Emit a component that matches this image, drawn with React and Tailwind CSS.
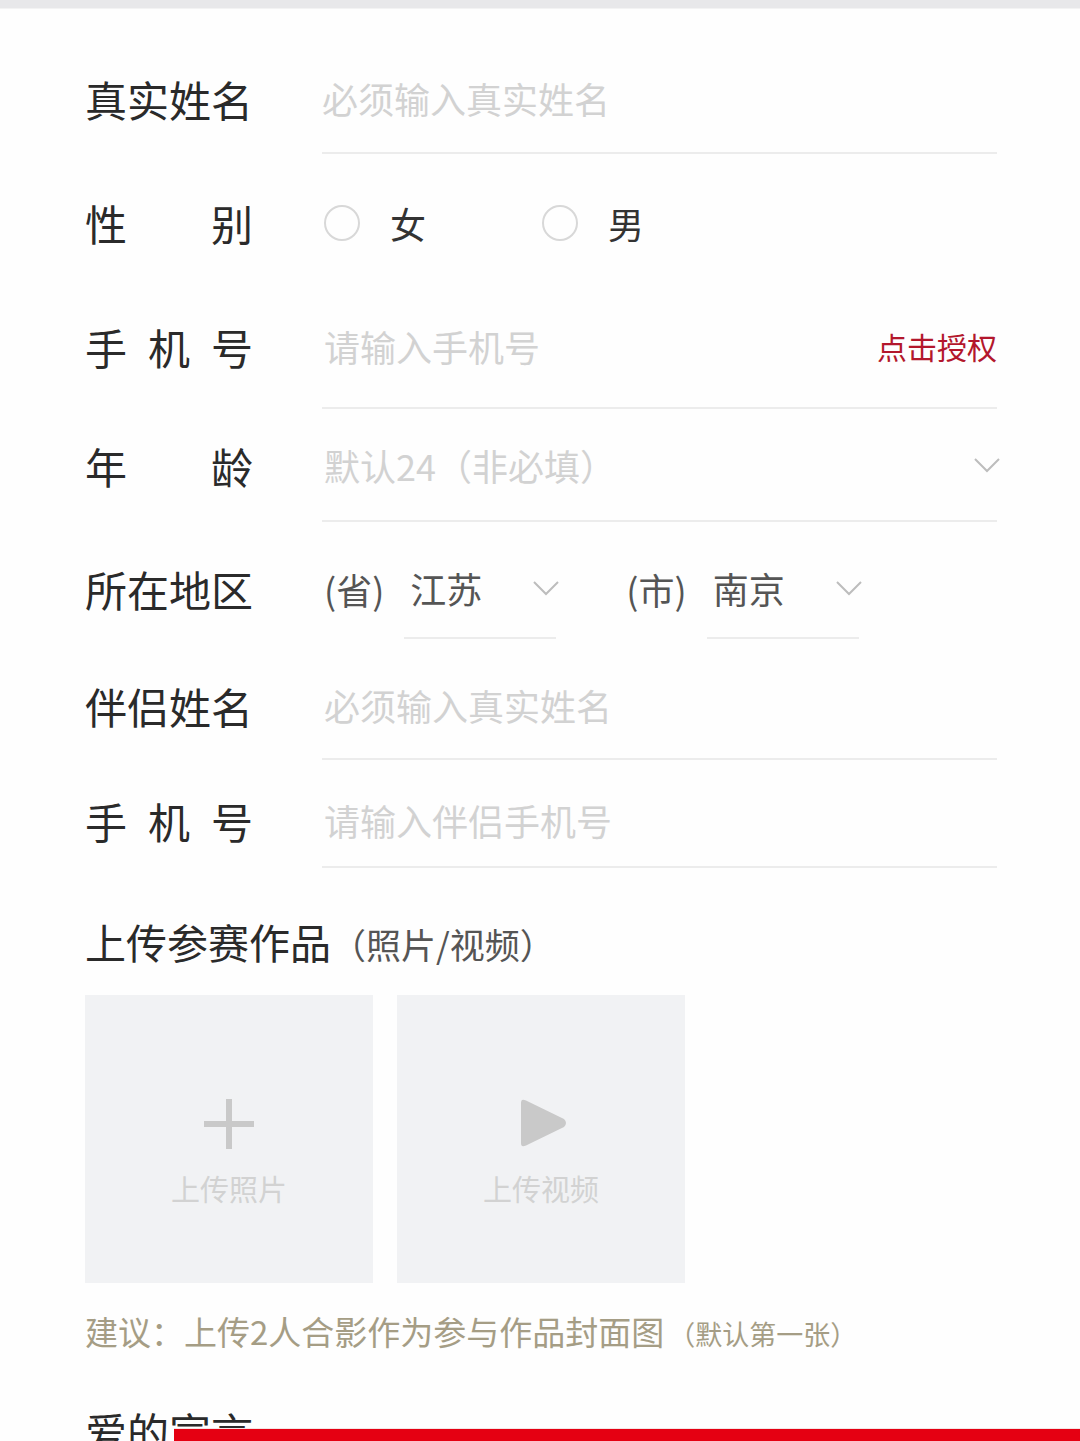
import React from "react";

const FONT = "font-['Noto_Sans_CJK_SC','Noto_Sans',sans-serif]";

function Label({ chars }) {
  return (
    <div className="flex w-[168px] shrink-0 items-center justify-between text-[42px] leading-none text-[#2a2a2a]">
      {chars.map((c, i) => (
        <span key={i}>{c}</span>
      ))}
    </div>
  );
}

function Chevron({ className = "" }) {
  return (
    <svg width="28" height="16" viewBox="0 0 28 16" className={className}>
      <polyline points="2,2 14,14 26,2" fill="none" stroke="#bdbdbd" strokeWidth="2" />
    </svg>
  );
}

function TextInput({ placeholder }) {
  return (
    <input
      placeholder={placeholder}
      className="w-full min-w-0 flex-1 bg-transparent text-[36px] leading-none text-[#333] outline-none placeholder:text-[#d2d2d2]"
    />
  );
}

function Radio({ label }) {
  return (
    <label className="flex items-center">
      <span className="h-[36px] w-[36px] rounded-full border-2 border-[#d8d8d8]" />
      <span className="ml-[30px] text-[36px] leading-none text-[#333]">{label}</span>
    </label>
  );
}

function SubSelect({ value }) {
  return (
    <div className="flex w-[152px] items-center justify-between border-b-2 border-[#ececec] pl-[6px]">
      <span className="text-[36px] leading-none text-[#555]">{value}</span>
      <Chevron className="mr-[-4px]" />
    </div>
  );
}

export default function App() {
  return (
    <div className={`relative h-[1441px] overflow-hidden bg-[#fefefe] ${FONT}`}>
      <div className="h-[9px] border-b border-[#f3f3f3] bg-[#e8e8ea]" />

      <div className="pl-[85px] pr-[83px]">
        {/* 真实姓名 */}
        <div className="flex h-[145px] pt-[35px]">
          <Label chars={["真", "实", "姓", "名"]} />
          <div className="ml-[69px] flex flex-1 items-center border-b-2 border-[#ececec]">
            <TextInput placeholder="必须输入真实姓名" />
          </div>
        </div>

        {/* 性别 */}
        <div className="flex h-[130px] pt-[8px]">
          <Label chars={["性", "别"]} />
          <div className="ml-[71px] flex flex-1 items-center gap-[116px]">
            <Radio label="女" />
            <Radio label="男" />
          </div>
        </div>

        {/* 手机号 */}
        <div className="flex h-[125px]">
          <Label chars={["手", "机", "号"]} />
          <div className="ml-[69px] flex flex-1 items-center border-b-2 border-[#ececec] pl-[2px]">
            <TextInput placeholder="请输入手机号" />
            <span className="text-[30px] leading-none text-[#b3172c]">点击授权</span>
          </div>
        </div>

        {/* 年龄 */}
        <div className="flex h-[113px]">
          <Label chars={["年", "龄"]} />
          <div className="ml-[69px] flex flex-1 items-center justify-between border-b-2 border-[#ececec] pl-[2px]">
            <span className="text-[36px] leading-none text-[#d2d2d2]">默认24（非必填）</span>
            <Chevron className="mr-[-4px]" />
          </div>
        </div>

        {/* 所在地区 */}
        <div className="flex h-[117px] pt-[17px]">
          <Label chars={["所", "在", "地", "区"]} />
          <div className="ml-[71px] flex flex-1 items-stretch">
            <span className="flex items-center text-[36px] leading-none text-[#555]">(省)</span>
            <div className="ml-[20px] flex">
              <SubSelect value="江苏" />
            </div>
            <span className="ml-[70px] flex items-center text-[36px] leading-none text-[#555]">(市)</span>
            <div className="ml-[20px] flex">
              <SubSelect value="南京" />
            </div>
          </div>
        </div>

        {/* 伴侣姓名 */}
        <div className="flex h-[121px] pt-[13px]">
          <Label chars={["伴", "侣", "姓", "名"]} />
          <div className="ml-[69px] flex flex-1 items-center border-b-2 border-[#ececec] pl-[2px]">
            <TextInput placeholder="必须输入真实姓名" />
          </div>
        </div>

        {/* 伴侣手机号 */}
        <div className="flex h-[108px] pt-[14px]">
          <Label chars={["手", "机", "号"]} />
          <div className="ml-[69px] flex flex-1 items-center border-b-2 border-[#ececec] pl-[2px]">
            <TextInput placeholder="请输入伴侣手机号" />
          </div>
        </div>

        {/* 上传参赛作品 */}
        <div className="mt-[53px] flex items-baseline">
          <span className="text-[41px] leading-none text-[#2a2a2a]">上传参赛作品</span>
          <span className="text-[35px] leading-none text-[#555]">（照片/视频）</span>
        </div>

        <div className="mt-[33px] flex gap-[24px]">
          <div className="flex h-[288px] w-[288px] flex-col items-center bg-[#f1f2f4] pt-[104px]">
            <svg width="50" height="50" viewBox="0 0 50 50">
              <rect x="22" y="0" width="6" height="50" fill="#c9c9c9" />
              <rect x="0" y="22" width="50" height="6" fill="#c9c9c9" />
            </svg>
            <span className="mt-[25px] text-[29px] leading-none text-[#d2d2d2]">上传照片</span>
          </div>
          <div className="flex h-[288px] w-[288px] flex-col items-center bg-[#f1f2f4] pt-[102px]">
            <svg width="52" height="52" viewBox="0 0 52 52" className="ml-[4px]">
              <path
                d="M4 6 Q4 1 9 3.5 L47 22 Q51 26 47 30 L9 48.5 Q4 51 4 46 Z"
                fill="#c9c9c9"
              />
            </svg>
            <span className="mt-[25px] text-[29px] leading-none text-[#d2d2d2]">上传视频</span>
          </div>
        </div>

        <div className="mt-[32px] flex items-baseline text-[#a59d85]">
          <span className="text-[33px] leading-none">建议：上传2人合影作为参与作品封面图</span>
          <span className="ml-[4px] text-[27px] leading-none">（默认第一张）</span>
        </div>

        <div className="mt-[62px] text-[42px] leading-none text-[#2a2a2a]">爱的宣言</div>
      </div>

      <div className="absolute bottom-0 left-[174px] right-0 top-[1428px] border-t border-[#f4e4e4] bg-[#e50012]" />
    </div>
  );
}
